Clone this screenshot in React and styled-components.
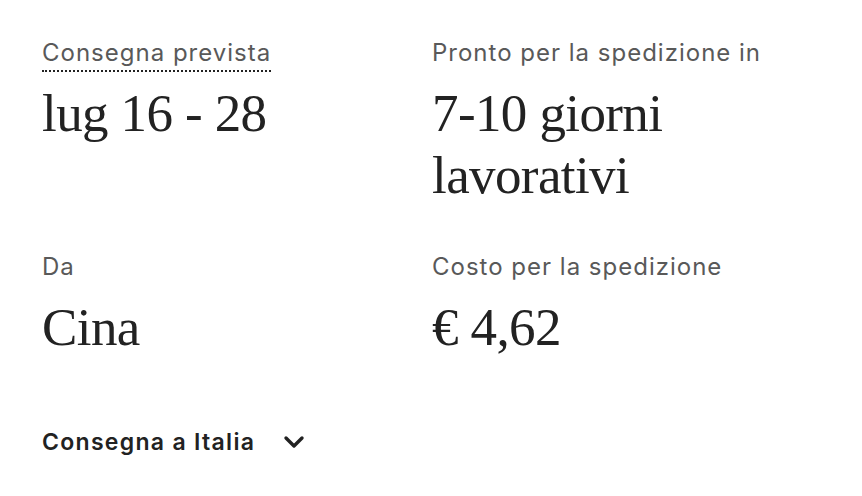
import React from 'react';
import styled, { createGlobalStyle } from 'styled-components';

const GlobalStyle = createGlobalStyle`
  body {
    margin: 0;
    background: #fff;
    font-family: Inter, "Liberation Sans", Arial, sans-serif;
  }
`;

const App = () => {
  const details = [
    { id: 1, label: 'Consegna prevista', value: 'lug 16 - 28', dotted: true },
    { id: 2, label: 'Pronto per la spedizione in', value: '7-10 giorni lavorativi' },
    { id: 3, label: 'Da', value: 'Cina' },
    { id: 4, label: 'Costo per la spedizione', value: '€ 4,62' },
  ];

  return (
    <Container>
      <GlobalStyle />
      <Grid>
        {details.map(item => (
          <Cell key={item.id}>
            <Label dotted={item.dotted}>{item.label}</Label>
            <Value>{item.value}</Value>
          </Cell>
        ))}
      </Grid>
      <Toggle>
        Consegna a Italia
        <svg width="22" height="14" viewBox="0 0 22 14" fill="none">
          <path d="M3 3l8 8 8-8" stroke="#222" strokeWidth="3.4" strokeLinecap="round" strokeLinejoin="round" />
        </svg>
      </Toggle>
    </Container>
  );
};

const Container = styled.div`
  padding: 38px 42px 0 42px;
  color: #222;
`;

const Grid = styled.div`
  display: grid;
  grid-template-columns: 390px 390px;
  row-gap: 46px;
`;

const Cell = styled.div`
  display: flex;
  flex-direction: column;
  align-items: flex-start;
`;

const Label = styled.span`
  font-size: 24px;
  line-height: 30px;
  letter-spacing: 1px;
  color: #595959;
  padding-bottom: 2px;
  border-bottom: ${props => (props.dotted ? '2px dotted #222' : '2px solid transparent')};
`;

const Value = styled.div`
  font-family: "Liberation Serif", "Times New Roman", serif;
  font-size: 53px;
  line-height: 62px;
  letter-spacing: -0.6px;
  color: #222;
  margin-top: 10px;
  max-width: 300px;
`;

const Toggle = styled.div`
  display: flex;
  align-items: center;
  gap: 28px;
  margin-top: 70px;
  font-size: 23px;
  font-weight: 600;
  letter-spacing: 1.3px;
  color: #222;
`;

export default App;
